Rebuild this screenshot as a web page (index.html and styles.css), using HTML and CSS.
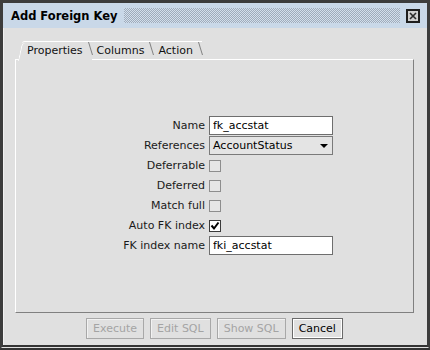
FILE: index.html
```html
<!DOCTYPE html>
<html lang="en">

<head>
    <meta charset="UTF-8" />
    <title>Add Foreign Key</title>
    <link rel="stylesheet" href="styles.css">
</head>

<body>
    <div class="window">
        <!-- Title bar -->
        <div class="titlebar">
            <span class="title">Add Foreign Key</span>
            <span class="dots"></span>
            <span class="close">
                <svg width="14" height="14" viewBox="0 0 14 14">
                    <rect x="1" y="1" width="12" height="12" fill="#cfcfcf" stroke="#1e1e1e" stroke-width="2" />
                    <path d="M4 4 L10 10 M10 4 L4 10" stroke="#2a2a2a" stroke-width="1.6" />
                </svg>
            </span>
        </div>

        <div class="content">
            <!-- Tabs -->
            <div class="tabs">
                <div class="tab active">Properties</div>
                <div class="tab">Columns</div>
                <div class="tab">Action</div>
            </div>

            <div class="panel">
                <div class="form">
                    <label>Name</label>
                    <div class="field"><input class="text" type="text" value="fk_accstat"></div>

                    <label>References</label>
                    <div class="field"><div class="select">AccountStatus<span class="arrow"></span></div></div>

                    <label>Deferrable</label>
                    <div class="field"><span class="check"></span></div>

                    <label>Deferred</label>
                    <div class="field"><span class="check"></span></div>

                    <label>Match full</label>
                    <div class="field"><span class="check"></span></div>

                    <label>Auto FK index</label>
                    <div class="field">
                        <span class="check checked">
                            <svg width="10" height="10" viewBox="0 0 10 10">
                                <path d="M1.5 4.5 L4 7.5 L8.5 1.5" fill="none" stroke="#000" stroke-width="2" />
                            </svg>
                        </span>
                    </div>

                    <label>FK index name</label>
                    <div class="field"><input class="text" type="text" value="fki_accstat"></div>
                </div>
            </div>

            <!-- Buttons -->
            <div class="buttons">
                <button disabled>Execute</button>
                <button disabled>Edit SQL</button>
                <button disabled>Show SQL</button>
                <button>Cancel</button>
            </div>
        </div>
    </div>
</body>

</html>
```

FILE: styles.css
```css
body {
    margin: 0;
    font-family: "DejaVu Sans", Verdana, sans-serif;
    font-size: 11px;
    color: #111;
    background-color: #e0e0e0;
}

.window {
    width: 430px;
    height: 350px;
    box-sizing: border-box;
    border: 3px solid #3c3c3c;
    border-bottom: 5px double #333;
    background-color: #e0e0e0;
    box-shadow: inset 1px 1px 0 #f0f0f0;
    display: flex;
    flex-direction: column;
}

.titlebar {
    height: 25px;
    flex-shrink: 0;
    display: flex;
    align-items: center;
    padding: 0 7px 0 8px;
    background-color: #c9d8e8;
}

.title {
    font-weight: bold;
    font-size: 11.5px;
    color: #000;
}

.dots {
    flex: 1;
    height: 15px;
    margin: 0 6px 0 6px;
    background: repeating-conic-gradient(#9eabbb 0 25%, #d3dfec 0 50%) 0 0 / 2px 2px;
}

.close {
    width: 14px;
    height: 14px;
    display: flex;
}

.content {
    flex: 1;
    display: flex;
    flex-direction: column;
    padding: 13px 13px 6px 12px;
}

.tabs {
    display: flex;
    height: 18px;
    margin-left: 3px;
    position: relative;
    z-index: 1;
}

.tab {
    position: relative;
    height: 18px;
    line-height: 17px;
    padding: 0 9px 0 5px;
    border-top: 1px solid #fff;
    box-sizing: border-box;
}

.tab::after {
    content: '';
    position: absolute;
    right: 3px;
    top: 0;
    height: 13px;
    border-right: 1px solid #808080;
    transform: skewX(17deg);
    transform-origin: top;
}

.tab.active {
    height: 19px;
    margin-left: 4px;
    padding-left: 5px;
    background-color: #e0e0e0;
    border-top-left-radius: 3px;
}

.tab.active::before {
    content: '';
    position: absolute;
    left: -4px;
    top: 1px;
    height: 18px;
    width: 6px;
    border-left: 1px solid #fff;
    border-top-left-radius: 4px;
    transform: skewX(-12deg);
    transform-origin: bottom;
    background-color: #e0e0e0;
}

.panel {
    flex: 1;
    border: 1px solid;
    border-color: #fff #808080 #808080 #fff;
    display: flex;
    align-items: center;
    padding-bottom: 1px;
}

.form {
    display: grid;
    grid-template-columns: 189px 124px;
    grid-auto-rows: 20px;
    column-gap: 4px;
}

.form label {
    justify-self: end;
    align-self: center;
    color: #1a1a1a;
}

.field {
    display: flex;
    align-items: center;
}

.text {
    width: 124px;
    height: 19px;
    box-sizing: border-box;
    border: 1px solid #6e6e6e;
    background-color: #fff;
    padding: 0 3px;
    font-family: "DejaVu Sans", Verdana, sans-serif;
    font-size: 11px;
    color: #000;
    outline: none;
}

.select {
    width: 124px;
    height: 19px;
    box-sizing: border-box;
    border: 1px solid #7a7a7a;
    background-color: #e4e4e4;
    padding: 0 3px;
    line-height: 17px;
    position: relative;
    color: #000;
}

.arrow {
    position: absolute;
    right: 4px;
    top: 7px;
    border-left: 4px solid transparent;
    border-right: 4px solid transparent;
    border-top: 4px solid #000;
}

.check {
    width: 12px;
    height: 12px;
    box-sizing: border-box;
    border: 1px solid #8e8e8e;
    background-color: #e6e6e6;
    display: flex;
    align-items: center;
    justify-content: center;
}

.check.checked {
    border-color: #3a3a3a;
    background-color: #fff;
}

.buttons {
    display: flex;
    justify-content: center;
    gap: 6px;
    margin-top: 5px;
}

button {
    height: 21px;
    padding: 0 6px;
    font-family: "DejaVu Sans", Verdana, sans-serif;
    font-size: 11px;
    color: #000;
    background-color: #e0e0e0;
    border: 1px solid #6a6a6a;
    box-shadow: inset 1px 1px 0 #fff, inset -1px -1px 0 #fff;
    border-radius: 0;
}

button:disabled {
    color: #a4a4a4;
    border-color: #a8a8a8;
    box-shadow: inset 1px 1px 0 #f2f2f2;
}
```
